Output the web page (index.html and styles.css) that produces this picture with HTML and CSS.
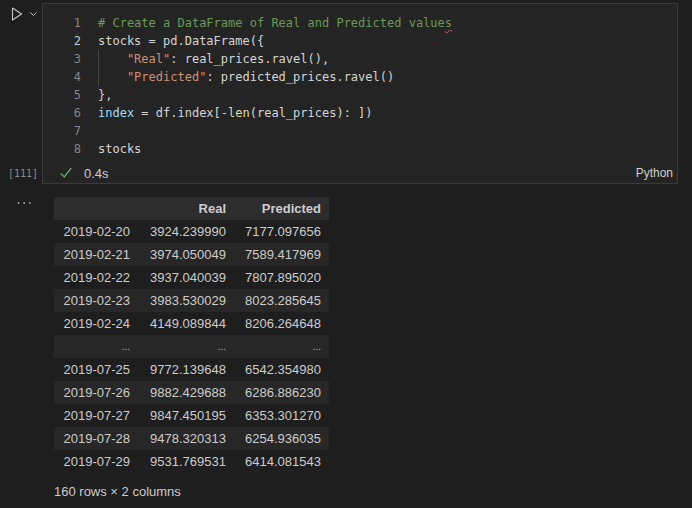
FILE: index.html
```html
<!DOCTYPE html>
<html>
<head>
<meta charset="utf-8">
<link rel="stylesheet" href="styles.css">
</head>
<body>
<div class="cell">
  <div class="gutter">
    <div class="run">
      <svg width="40" height="14" viewBox="0 0 40 14">
        <path d="M12.5 1 L21.5 7 L12.5 13 Z" fill="none" stroke="#c5c5c5" stroke-width="1.1" stroke-linejoin="round"/>
        <path d="M30.5 5.5 L33.5 8.5 L36.5 5.5" fill="none" stroke="#c5c5c5" stroke-width="1"/>
      </svg>
    </div>
    <div class="count">[111]</div>
  </div>
  <div class="editor">
    <div class="code">
      <div class="line"><span class="ln">1</span><span class="src"><span class="c">#&nbsp;Create&nbsp;a&nbsp;DataFrame&nbsp;of&nbsp;Real&nbsp;and&nbsp;Predicted&nbsp;value<span class="squig">s</span></span></span></div>
      <div class="line"><span class="ln active">2</span><span class="src">stocks&nbsp;=&nbsp;pd.DataFrame({</span></div>
      <div class="line"><span class="ln">3</span><span class="src"><span class="indent"></span><span class="s">"Real"</span>:&nbsp;real_prices.ravel(),</span></div>
      <div class="line"><span class="ln">4</span><span class="src"><span class="indent"></span><span class="s">"Predicted"</span>:&nbsp;predicted_prices.ravel()</span></div>
      <div class="line"><span class="ln">5</span><span class="src">},</span></div>
      <div class="line"><span class="ln">6</span><span class="src"><span class="v">index</span>&nbsp;=&nbsp;df.index[-<span class="f">len</span>(real_prices):&nbsp;])</span></div>
      <div class="line"><span class="ln">7</span><span class="src"></span></div>
      <div class="line"><span class="ln">8</span><span class="src">stocks</span></div>
    </div>
    <div class="status">
      <svg class="check" width="12" height="12" viewBox="0 0 12 12">
        <path d="M0.8 6.3 L4.3 9.8 L11.2 1.2" fill="none" stroke="#6fbf73" stroke-width="1.2"/>
      </svg>
      <span class="time">0.4s</span>
      <span class="lang">Python</span>
    </div>
  </div>
</div>

<div class="output">
  <div class="out-gutter">
    <svg width="16" height="4" viewBox="0 0 16 4"><circle cx="1.5" cy="2" r="0.9" fill="#a8a8a8"/><circle cx="7.2" cy="2" r="0.9" fill="#a8a8a8"/><circle cx="12.9" cy="2" r="0.9" fill="#a8a8a8"/></svg>
  </div>
  <div class="result">
    <table class="df">
      <thead>
        <tr><th class="c1"></th><th class="c2">Real</th><th class="c3">Predicted</th></tr>
      </thead>
      <tbody>
        <tr><td>2019-02-20</td><td>3924.239990</td><td>7177.097656</td></tr>
        <tr><td>2019-02-21</td><td>3974.050049</td><td>7589.417969</td></tr>
        <tr><td>2019-02-22</td><td>3937.040039</td><td>7807.895020</td></tr>
        <tr><td>2019-02-23</td><td>3983.530029</td><td>8023.285645</td></tr>
        <tr><td>2019-02-24</td><td>4149.089844</td><td>8206.264648</td></tr>
        <tr class="dots"><td>...</td><td>...</td><td>...</td></tr>
        <tr><td>2019-07-25</td><td>9772.139648</td><td>6542.354980</td></tr>
        <tr><td>2019-07-26</td><td>9882.429688</td><td>6286.886230</td></tr>
        <tr><td>2019-07-27</td><td>9847.450195</td><td>6353.301270</td></tr>
        <tr><td>2019-07-28</td><td>9478.320313</td><td>6254.936035</td></tr>
        <tr><td>2019-07-29</td><td>9531.769531</td><td>6414.081543</td></tr>
      </tbody>
    </table>
    <div class="shape">160 rows × 2 columns</div>
  </div>
</div>
</body>
</html>
```

FILE: styles.css
```css
html, body {
  margin: 0;
  padding: 0;
  background: #1e1e1e;
}
body {
  width: 692px;
  height: 508px;
  overflow: hidden;
  font-family: "Liberation Sans", Arial, sans-serif;
  color: #cccccc;
}
.cell {
  display: flex;
  margin-top: 3px;
  height: 181px;
}
.gutter {
  width: 42px;
  display: flex;
  flex-direction: column;
  justify-content: space-between;
}
.run {
  padding-top: 4px;
  height: 14px;
}
.run svg {
  display: block;
}
.count {
  font-family: "DejaVu Sans Mono", monospace;
  font-size: 10px;
  line-height: 14px;
  color: #8a8a8a;
  padding-left: 8px;
  margin-bottom: 3px;
}
.editor {
  width: 634px;
  border: 1px solid #3b3b3b;
  background: #242424;
  display: flex;
  flex-direction: column;
}
.code {
  padding-top: 10px;
  font-family: "DejaVu Sans Mono", Menlo, monospace;
  font-size: 12px;
  line-height: 18px;
  color: #d4d4d4;
}
.line {
  display: flex;
  height: 18px;
  white-space: pre;
}
.ln {
  width: 38px;
  text-align: right;
  color: #858585;
  margin-right: 17px;
}
.ln.active {
  color: #c6c6c6;
}
.src {
  display: inline-block;
}
.c { color: #6a9955; }
.s { color: #ce9178; }
.v { color: #9cdcfe; }
.f { color: #dcdcaa; }
.squig {
  text-decoration: underline wavy #f14c4c;
  text-decoration-thickness: 1px;
  text-underline-offset: 2px;
}
.indent {
  display: inline-block;
  width: 28.9px;
  height: 18px;
  vertical-align: top;
  box-shadow: inset 1px 0 0 #444444;
}
.status {
  display: flex;
  align-items: center;
  height: 20px;
  margin-top: 5px;
  padding-left: 17px;
  padding-right: 4px;
  font-size: 12.5px;
}
.check {
  display: block;
  margin-right: 12px;
}
.time {
  color: #cccccc;
  font-size: 13px;
}
.lang {
  margin-left: auto;
  color: #cccccc;
  font-size: 12px;
}
.output {
  display: flex;
  margin-top: 13px;
}
.out-gutter {
  width: 54px;
  padding-top: 4px;
  padding-left: 17px;
  box-sizing: border-box;
}
.out-gutter svg {
  display: block;
}
.df {
  border-collapse: collapse;
  font-size: 13px;
  color: #cccccc;
}
.df th, .df td {
  height: 23px;
  padding: 0 8px 0 0;
  text-align: right;
  line-height: 23px;
  box-sizing: border-box;
}
.df th {
  font-weight: bold;
  background: #2d2d2d;
}
.df .c1 { width: 84px; }
.df .c2 { width: 96px; }
.df .c3 { width: 95px; }
.df tbody tr:nth-child(even) {
  background: #272727;
}
.df tr.dots td {
  font-size: 10px;
  color: #bbbbbb;
}
.shape {
  margin-top: 10px;
  font-size: 13px;
  line-height: 18px;
  color: #cccccc;
}
```
